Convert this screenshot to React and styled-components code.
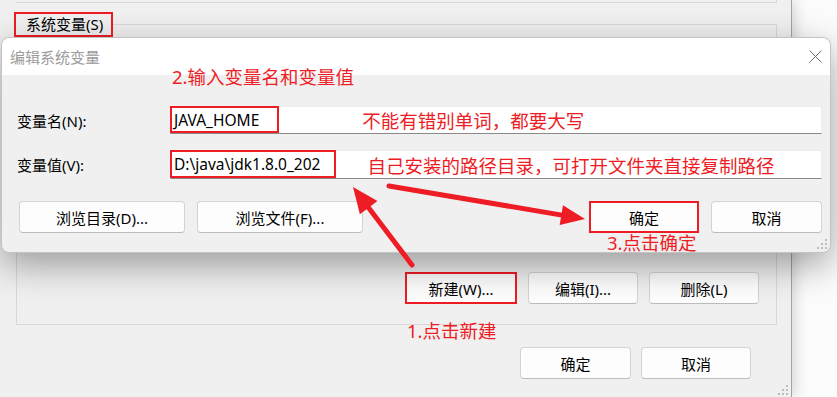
import styled, { createGlobalStyle } from "styled-components";

const RED = "#ee1c25";

const GlobalStyle = createGlobalStyle`
  html, body {
    margin: 0;
    padding: 0;
    background: #f7f7f7;
  }
  body {
    font-family: "Noto Sans", "Noto Sans CJK SC", sans-serif;
    font-size: 15px;
    color: #000;
  }
`;

const Desktop = styled.div`
  position: relative;
  width: 837px;
  height: 397px;
  overflow: hidden;
  background: linear-gradient(to right, #dadada, #f6f6f6 30%, #fcfcfc);
`;

const MainWindow = styled.div`
  width: 792px;
  height: 397px;
  box-sizing: border-box;
  display: flex;
  flex-direction: column;
  background: #f0f0f0;
  border-right: 1px solid #a3a3a3;
  box-shadow: 2px 0 14px rgba(0, 0, 0, 0.18);
`;

const UpperGroupEdge = styled.div`
  height: 3px;
  width: 761px;
  margin-left: 16px;
  box-sizing: border-box;
  border-right: 1px solid #d8d8d8;
  border-bottom: 1px solid #d8d8d8;
`;

const Group = styled.fieldset`
  margin: 9px 0 0 16px;
  width: 761px;
  box-sizing: border-box;
  min-width: 0;
  padding: 0 16px 20px 15px;
  border: 1px solid #d8d8d8;
`;

const GroupTitle = styled.legend`
  margin-left: -18px;
  padding: 0 8px 0 10px;
  height: 25px;
  box-sizing: border-box;
  line-height: 21px;
  border: 2px solid ${RED};
  font-size: 15px;
`;

const ListView = styled.div`
  margin-top: 2px;
  height: 213px;
  width: 730px;
  box-sizing: border-box;
  background: #fff;
  border: 1px solid #828282;
`;

const ButtonRow = styled.div`
  display: flex;
  justify-content: flex-end;
  gap: ${(p) => p.$gap || 12}px;
  margin-top: ${(p) => p.$top || 0}px;
  padding-right: ${(p) => p.$right || 0}px;
  padding-left: ${(p) => p.$left || 0}px;
`;

const DialogButtons = styled(ButtonRow)`
  grid-column: 1 / -1;
`;

const Button = styled.button`
  width: ${(p) => p.$w || 110}px;
  height: 32px;
  box-sizing: border-box;
  padding: 0;
  font-family: inherit;
  font-size: 15px;
  color: #000;
  background: #fdfdfd;
  border: ${(p) => (p.$marked ? `2px solid ${RED}` : "1px solid #d3d3d3")};
  border-bottom-color: ${(p) => (p.$marked ? RED : "#bcbcbc")};
  border-radius: ${(p) => (p.$marked ? 0 : 4)}px;
`;

const Spacer = styled.div`
  flex: 1;
`;

const GripBox = styled.svg`
  display: block;
  width: 10px;
  height: 10px;
  margin: auto 3px 2px auto;
`;

const Dialog = styled.div`
  position: absolute;
  left: 1px;
  top: 37px;
  width: 830px;
  height: 216px;
  box-sizing: border-box;
  display: flex;
  flex-direction: column;
  background: #f0f0f0;
  border: 1px solid #c4c4c4;
  border-radius: 8px;
  box-shadow: 0 12px 36px rgba(0, 0, 0, 0.36);
`;

const TitleBar = styled.div`
  height: 37px;
  display: flex;
  align-items: center;
  justify-content: space-between;
  padding: 0 8px 0 8px;
  background: #fff;
  border-radius: 8px 8px 0 0;
  color: #9b9b9b;
  font-size: 15px;
`;

const Body = styled.div`
  flex: 1;
  position: relative;
  display: grid;
  grid-template-columns: 153px 1fr;
  grid-auto-rows: min-content;
  row-gap: 16px;
  align-items: center;
  padding: 31px 8px 0 15px;
`;

const FieldLabel = styled.label`
  font-size: 15px;
`;

const TextBox = styled.div`
  height: ${(p) => p.$h || 28}px;
  box-sizing: border-box;
  display: flex;
  align-items: center;
  background: #fff;
  border: 1px solid #ececec;
  border-bottom-color: #8a8a8a;
`;

const Value = styled.span`
  align-self: stretch;
  display: flex;
  align-items: center;
  margin: -1px 0 0 -1px;
  padding: 0 ${(p) => p.$pad}px 0 2px;
  border: 2px solid ${RED};
  font-size: 15.5px;
`;

const Note = styled.span`
  margin-left: ${(p) => p.$gap}px;
  color: ${RED};
  font-size: 18.5px;
  white-space: nowrap;
`;

const Callout = styled.div`
  position: absolute;
  left: ${(p) => p.$x}px;
  top: ${(p) => p.$y}px;
  line-height: 20px;
  color: ${RED};
  font-size: 18.5px;
  white-space: nowrap;
`;

const ArrowLayer = styled.svg`
  position: absolute;
  left: 0;
  top: 0;
  pointer-events: none;
`;

const DialogGrip = styled.svg`
  position: absolute;
  right: 3px;
  bottom: 3px;
  width: 10px;
  height: 10px;
`;

function GripDots() {
  const dots = [
    [8, 0],
    [4, 4],
    [8, 4],
    [0, 8],
    [4, 8],
    [8, 8],
  ];
  return dots.map(([x, y]) => (
    <rect key={`${x}-${y}`} x={x} y={y} width="2" height="2" fill="#bcbcbc" />
  ));
}

function Arrow({ x1, y1, x2, y2, head = 26, half = 11, width = 5 }) {
  const len = Math.hypot(x2 - x1, y2 - y1);
  const ux = (x2 - x1) / len;
  const uy = (y2 - y1) / len;
  const bx = x2 - ux * head;
  const by = y2 - uy * head;
  const p1 = `${bx - uy * half},${by + ux * half}`;
  const p2 = `${bx + uy * half},${by - ux * half}`;
  return (
    <g fill={RED} stroke={RED}>
      <line x1={x1} y1={y1} x2={bx + ux * 2} y2={by + uy * 2} strokeWidth={width} strokeLinecap="round" />
      <polygon points={`${x2},${y2} ${p1} ${p2}`} stroke="none" />
    </g>
  );
}

export default function App() {
  return (
    <>
      <GlobalStyle />
      <Desktop>
        <MainWindow>
          <UpperGroupEdge />
          <Group>
            <GroupTitle>系统变量(S)</GroupTitle>
            <ListView />
            <ButtonRow $top={20} $right={1} $gap={11}>
              <Button $marked $w={112}>新建(W)...</Button>
              <Button>编辑(I)...</Button>
              <Button>删除(L)</Button>
            </ButtonRow>
          </Group>
          <ButtonRow $top={22} $right={40} $gap={10}>
            <Button $w={111}>确定</Button>
            <Button>取消</Button>
          </ButtonRow>
          <GripBox viewBox="0 0 10 10">
            <GripDots />
          </GripBox>
        </MainWindow>

        <Dialog>
          <TitleBar>
            <span>编辑系统变量</span>
            <svg width="13" height="13" viewBox="0 0 13 13">
              <path d="M0.5 0.5 L12.5 12.5 M12.5 0.5 L0.5 12.5" stroke="#6b6b6b" strokeWidth="1" />
            </svg>
          </TitleBar>
          <Body>
            <FieldLabel>变量名(N):</FieldLabel>
            <TextBox>
              <Value $pad={18}>JAVA_HOME</Value>
              <Note $gap={83}>不能有错别单词，都要大写</Note>
            </TextBox>
            <FieldLabel>变量值(V):</FieldLabel>
            <TextBox $h={29}>
              <Value $pad={14}>D:\java\jdk1.8.0_202</Value>
              <Note $gap={31}>自己安装的路径目录，可打开文件夹直接复制路径</Note>
            </TextBox>
            <DialogButtons $top={6} $left={2} $gap={12}>
              <Button $w={166}>浏览目录(D)...</Button>
              <Button $w={166}>浏览文件(F)...</Button>
              <Spacer />
              <Button $marked $w={110}>确定</Button>
              <Button $w={111}>取消</Button>
            </DialogButtons>
            <Callout $x={170} $y={-8}>2.输入变量名和变量值</Callout>
            <Callout $x={605} $y={158}>3.点击确定</Callout>
            <DialogGrip viewBox="0 0 10 10">
              <GripDots />
            </DialogGrip>
          </Body>
        </Dialog>

        <Callout $x={407} $y={321}>1.点击新建</Callout>

        <ArrowLayer width="837" height="397" viewBox="0 0 837 397">
          <Arrow x1={412} y1={265} x2={353} y2={187} head={26} half={11} width={5} />
          <Arrow x1={389} y1={186} x2={585} y2={219} head={24} half={10} width={5} />
        </ArrowLayer>
      </Desktop>
    </>
  );
}
